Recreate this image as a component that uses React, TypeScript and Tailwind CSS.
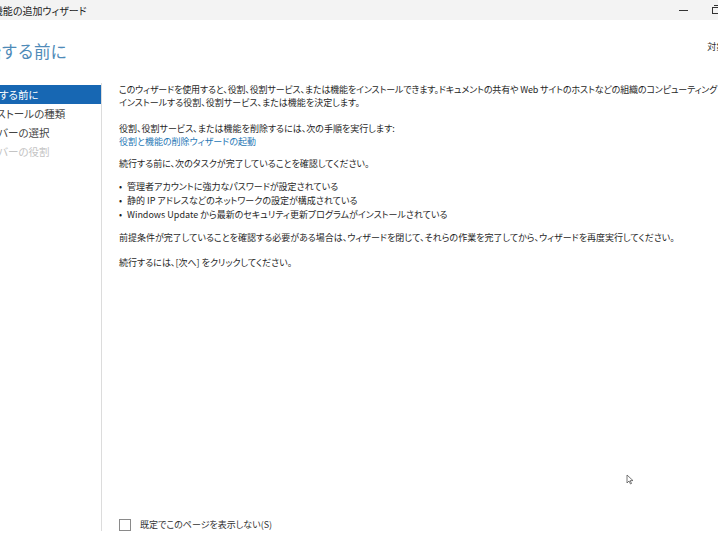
const jp = "font-['Noto_Sans_CJK_JP','Noto_Sans',sans-serif] [font-feature-settings:'palt']"

const steps = [
  { label: '開始する前に', state: 'active' },
  { label: 'インストールの種類', state: 'normal' },
  { label: 'サーバーの選択', state: 'normal' },
  { label: 'サーバーの役割', state: 'disabled' },
]

function Sidebar() {
  return (
    <div className="w-[102px] shrink-0 border-r border-[#dcdcdc] pt-[2px] flex flex-col">
      {steps.map((s) => (
        <div
          key={s.label}
          className={
            'h-[19px] flex items-center whitespace-nowrap text-[10.5px] ' +
            (s.state === 'active'
              ? 'bg-[#1767b3] text-white'
              : s.state === 'disabled'
                ? 'text-[#c4c4c4]'
                : 'text-[#444]')
          }
        >
          <span className="-ml-[22px]">{s.label}</span>
        </div>
      ))}
    </div>
  )
}

function Content() {
  return (
    <div className="flex-1 pl-[17px] text-[9px] leading-[13px] text-[#1f1f1f] whitespace-nowrap overflow-hidden">
      <p className="tracking-[-0.15px]">
        このウィザードを使用すると、役割、役割サービス、または機能をインストールできます。ドキュメントの共有や Web サイトのホストなどの組織のコンピューティング ニーズに基づいて、
      </p>
      <p>インストールする役割、役割サービス、または機能を決定します。</p>

      <p className="mt-[13px]">役割、役割サービス、または機能を削除するには、次の手順を実行します:</p>
      <p className="text-[#2677b5]">役割と機能の削除ウィザードの起動</p>

      <p className="mt-[9px]">続行する前に、次のタスクが完了していることを確認してください。</p>

      <ul className="mt-[10px] leading-[14px]">
        <li className="flex">
          <span className="w-[8px]">•</span>管理者アカウントに強力なパスワードが設定されている
        </li>
        <li className="flex">
          <span className="w-[8px]">•</span>静的 IP アドレスなどのネットワークの設定が構成されている
        </li>
        <li className="flex">
          <span className="w-[8px]">•</span>Windows Update から最新のセキュリティ更新プログラムがインストールされている
        </li>
      </ul>

      <p className="mt-[9px]">
        前提条件が完了していることを確認する必要がある場合は、ウィザードを閉じて、それらの作業を完了してから、ウィザードを再度実行してください。
      </p>

      <p className="mt-[12px]">続行するには、[次へ] をクリックしてください。</p>

      <div className="h-[249px]" />

      <label className="flex items-center gap-[9px] text-[#333]">
        <span className="w-[12px] h-[12px] border border-[#8a8a8a] bg-white" />
        既定でこのページを表示しない(S)
      </label>
    </div>
  )
}

export default function App() {
  return (
    <div className={'relative w-[718px] h-[545px] overflow-hidden bg-white ' + jp}>
      {/* title bar */}
      <div className="h-[20px] bg-[#f3f3f3] flex items-center justify-between text-[10px] text-[#222]">
        <span className="-ml-[36px] whitespace-nowrap">役割と機能の追加ウィザード</span>
        <div className="flex items-center gap-[24px] -mr-[6px]">
          <span className="w-[9px] h-px bg-[#333]" />
          <span className="relative w-[12px] h-[10px]">
            <span className="absolute left-0 top-[2px] w-[7px] h-[7px] border border-[#333]" />
            <span className="absolute left-[2px] top-0 w-[7px] h-[7px] border-t border-r border-[#333]" />
          </span>
        </div>
      </div>

      {/* heading */}
      <div className="h-[63px] flex items-start justify-between">
        <h1 className="-ml-[32px] mt-[20px] text-[16.5px] leading-[22px] text-[#4f8bb8] whitespace-nowrap [font-feature-settings:normal]">
          開始する前に
        </h1>
        <span className="mt-[20px] -mr-[42px] text-[9px] text-[#333] whitespace-nowrap">対象サーバー</span>
      </div>

      {/* body */}
      <div className="flex h-[448px]">
        <Sidebar />
        <Content />
      </div>

      {/* mouse cursor */}
      <svg className="absolute left-[626px] top-[474px]" width="9" height="12" viewBox="0 0 9 12">
        <path d="M1 1 L1 9 L3 7 L4.5 10 L5.5 9.5 L4.2 6.6 L7 6.6 Z" fill="#fff" stroke="#555" strokeWidth="0.8" />
      </svg>
    </div>
  )
}
